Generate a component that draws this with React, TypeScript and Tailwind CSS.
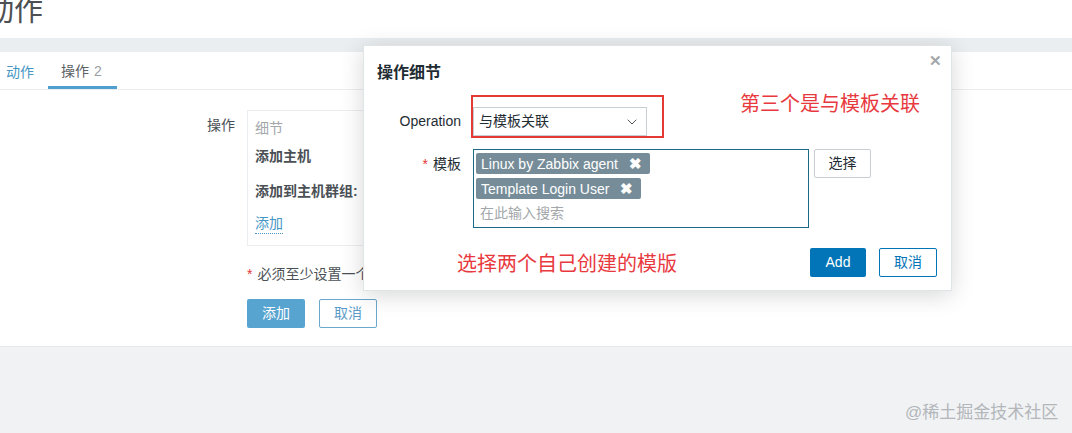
import { ChevronDown } from 'lucide-react';

const font = 'font-["Liberation_Sans","Noto_Sans_CJK_SC",sans-serif]';

function Chip({ label }: { label: string }) {
  return (
    <div className="inline-flex items-center h-[21px] rounded-[2px] bg-[#768d99] text-white text-[14px] pl-[5px] pr-[8px] gap-[11px] leading-none">
      <span>{label}</span>
      <span className="text-[15px] font-bold">✖</span>
    </div>
  );
}

function OperationDialog() {
  return (
    <div className="absolute left-[363px] top-[45px] w-[589px] h-[246px] bg-white border border-[#dfe4e7] shadow-[0_4px_22px_rgba(0,0,0,0.16)] flex flex-col">
      <div className="flex items-start justify-between pl-[13px] pr-[9px] pt-[17px] h-[51px]">
        <h2 className="text-[16px] font-bold text-[#1f2c33] leading-5">操作细节</h2>
        <span className="text-[#a3a7aa] text-[15px] font-bold leading-none -mt-[10px]">✕</span>
      </div>

      <div className="flex flex-col gap-[13px] px-[13px] pt-[10px]">
        <div className="flex items-center gap-[12px]">
          <label className="w-[84px] text-right text-[14px] text-[#1f2c33]">Operation</label>
          <div className="w-[174px] h-[29px] border border-[#c8cfd3] flex items-center justify-between pl-[5px] pr-[6px] text-[14px] text-[#1f2c33]">
            <span>与模板关联</span>
            <ChevronDown className="w-4 h-4 text-[#555]" strokeWidth={1.5} />
          </div>
        </div>

        <div className="flex items-start gap-[12px]">
          <label className="w-[84px] text-right text-[14px] text-[#1f2c33] pt-[5px]">
            <span className="text-[#e33734] mr-[5px]">*</span>模板
          </label>
          <div className="w-[336px] h-[79px] border border-[#1b6a87] pl-[2px] pt-[3px] flex flex-col items-start gap-[4px]">
            <Chip label="Linux by Zabbix agent" />
            <Chip label="Template Login User" />
            <span className="text-[14px] text-[#a3a7aa] pl-[4px] leading-5">在此输入搜索</span>
          </div>
          <button className="ml-[-7px] w-[57px] h-[29px] border border-[#c8cfd3] rounded-[2px] text-[14px] text-[#1f2c33] bg-white">
            选择
          </button>
        </div>
      </div>

      <div className="mt-auto flex justify-end gap-[13px] pr-[14px] pb-[13px]">
        <button className="w-[56px] h-[29px] rounded-[2px] bg-[#0275b8] text-white text-[14px]">Add</button>
        <button className="w-[58px] h-[29px] rounded-[2px] border border-[#0275b8] text-[#0275b8] text-[14px] bg-white">取消</button>
      </div>
    </div>
  );
}

export default function App() {
  return (
    <div className={`relative w-[1072px] h-[433px] overflow-hidden bg-[#f0f2f4] ${font}`}>
      <header className="h-[38px] bg-white overflow-hidden">
        <h1 className="text-[29px] leading-[29px] text-[#4d4f52] ml-[-15px] mt-[-3px]">动作</h1>
      </header>
      <div className="h-[14px] bg-[#ebeef0]" />

      <main className="bg-white h-[295px] border-b border-[#e6e9eb]">
        <nav className="flex items-end h-[38px] border-b border-[#ebeef0] text-[14px]">
          <div className="h-full flex items-center px-[6px] pt-[4px] text-[#4796c4]">动作</div>
          <div className="h-full flex items-center pl-[13px] pr-[15px] ml-[8px] border-b-[3px] border-[#4f9fcf] pt-[5px] text-[#5a5f63]">
            操作<span className="ml-[5px] text-[#9aa0a4]">2</span>
          </div>
        </nav>

        <div className="pt-[20px] flex flex-col gap-[14px]">
          <div className="flex items-start gap-[12px]">
            <div className="w-[235px] text-right text-[14px] text-[#4a5055] pt-[5px]">操作</div>
            <div className="w-[130px] h-[136px] border border-[#ebeef0] px-[7px] pt-[7px] flex flex-col text-[14px]">
              <span className="text-[#a3a7aa] leading-5">细节</span>
              <span className="font-bold text-[#4a5055] mt-[8px] leading-5">添加主机</span>
              <span className="font-bold text-[#4a5055] mt-[15px] leading-5 whitespace-nowrap">添加到主机群组: </span>
              <span className="mt-[12px] leading-5 text-[#4796c4] border-b border-dotted border-[#4796c4] self-start">添加</span>
            </div>
          </div>

          <div className="pl-[247px] text-[14px] text-[#4a5055] pt-[4px]">
            <span className="text-[#e33734] mr-[5px]">*</span>必须至少设置一个操作
          </div>

          <div className="pl-[247px] flex gap-[14px]">
            <button className="w-[58px] h-[29px] rounded-[2px] bg-[#58a4d0] text-white text-[14px]">添加</button>
            <button className="w-[58px] h-[29px] rounded-[2px] border border-[#6aa8cd] text-[#5b9bc7] text-[14px] bg-white">取消</button>
          </div>
        </div>
      </main>

      <OperationDialog />

      <div className="absolute left-[471px] top-[95px] w-[193px] h-[43px] border-[2px] border-[#e53935] pointer-events-none" />
      <div className="absolute left-[740px] top-[92px] text-[20px] text-[#e8393e] leading-6">第三个是与模板关联</div>
      <div className="absolute left-[457px] top-[252px] text-[20px] text-[#e8393e] leading-6">选择两个自己创建的模版</div>

      <div className="absolute left-[905px] top-[403px] text-[17px] text-[#b3b6ba] leading-5">@稀土掘金技术社区</div>
    </div>
  );
}
